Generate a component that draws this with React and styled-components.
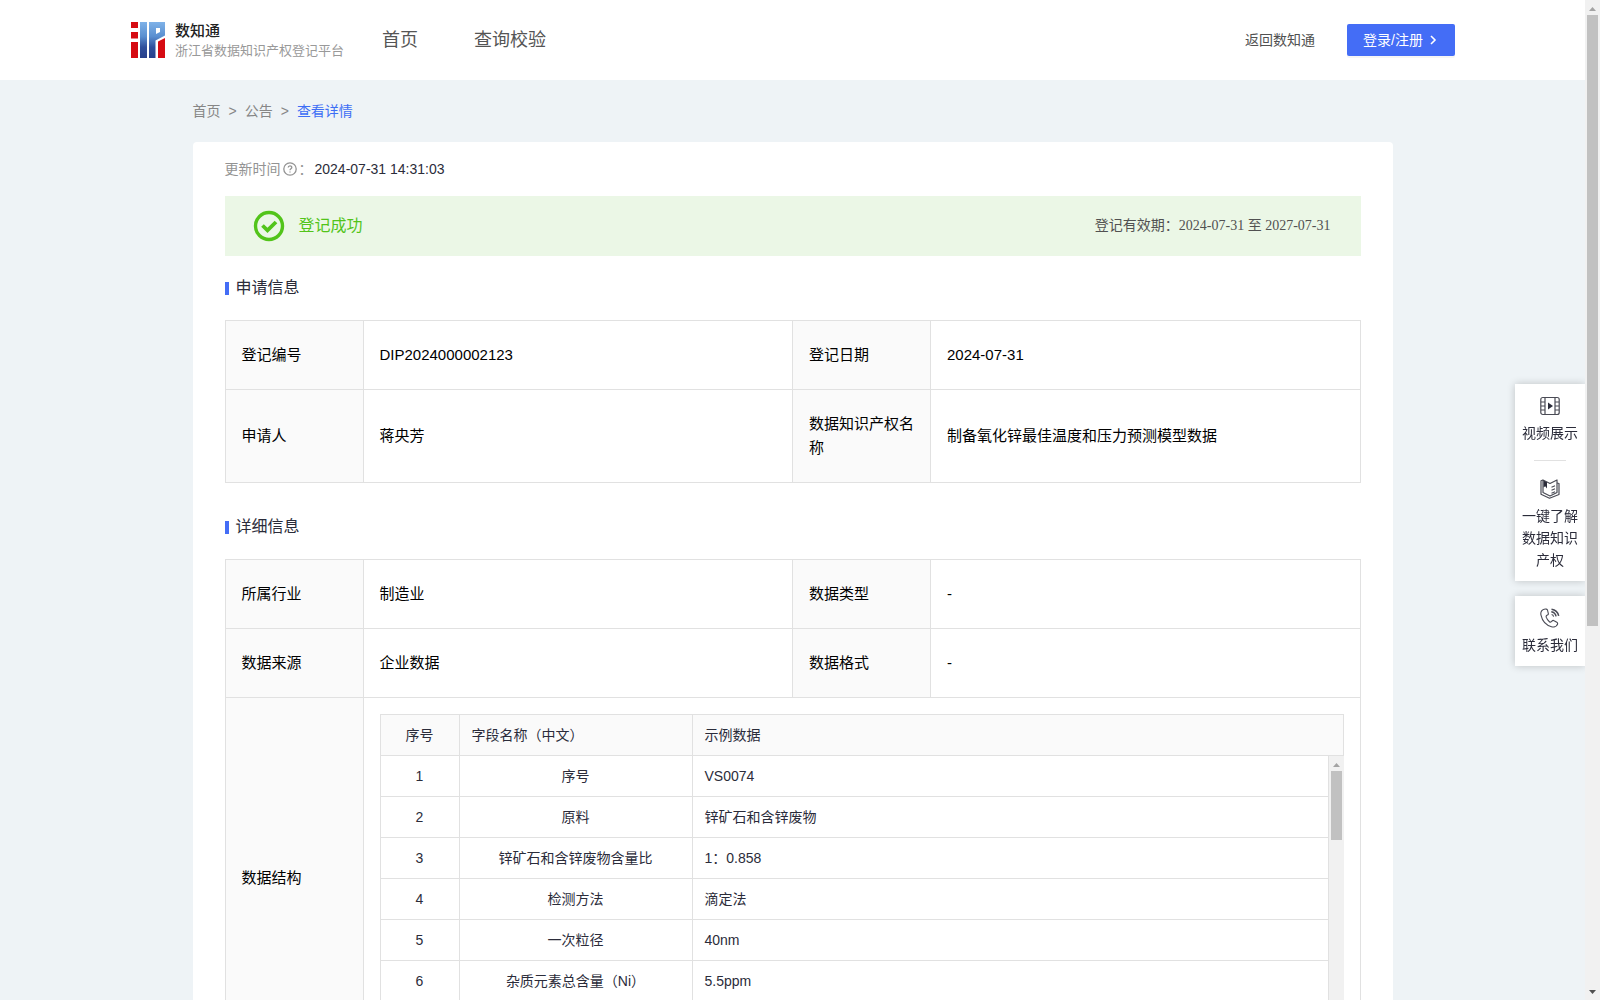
import React from 'react';
import styled, { createGlobalStyle } from 'styled-components';

const GlobalStyle = createGlobalStyle`
  * {
    box-sizing: border-box;
  }

  body {
    margin: 0;
    background: #eef3f6;
    color: #2b2c3a;
    font-family: 'Liberation Sans', 'Noto Sans CJK SC', sans-serif;
    font-size: 14px;
    line-height: 22px;
  }
`;

const Shell = styled.div`
  display: flex;
  height: 100vh;
`;

const Viewport = styled.div`
  flex: 1;
  min-width: 0;
  overflow-y: auto;
  scrollbar-width: none;
`;

const Bar = styled.div`
  display: flex;
  flex-direction: column;
  flex: none;
  align-items: center;
  width: 15px;
  background: #f1f1f1;
`;

const BarTrack = styled.div`
  flex: 1;
  width: 11px;
`;

const BarThumb = styled.div`
  height: ${props => props.$size};
  background: #c1c1c1;
`;

const Header = styled.header`
  display: flex;
  align-items: center;
  height: 80px;
  padding: 0 130px 0 131px;
  background: #fff;
`;

const Brand = styled.a`
  display: flex;
  align-items: center;
  gap: 10px;
  text-decoration: none;
`;

const BrandText = styled.div`
  padding-top: 2px;
  line-height: 20px;
`;

const BrandName = styled.div`
  color: #222;
  font-size: 15px;
  font-weight: 500;
`;

const BrandSub = styled.div`
  color: #999;
  font-size: 13px;
`;

const Nav = styled.nav`
  display: flex;
  gap: 56px;
  margin-left: 38px;
`;

const NavLink = styled.a`
  color: #555;
  font-size: 18px;
  text-decoration: none;
`;

const HeaderRight = styled.div`
  display: flex;
  align-items: center;
  gap: 32px;
  margin-left: auto;
`;

const BackLink = styled.a`
  color: #515151;
  text-decoration: none;
`;

const LoginButton = styled.button`
  display: flex;
  align-items: center;
  gap: 4px;
  width: 108px;
  height: 32px;
  padding: 0 16px;
  border: 0;
  border-radius: 2px;
  background: #446df6;
  box-shadow: 0 2px 0 rgba(0, 0, 0, 0.04);
  color: #fff;
  font: inherit;
  white-space: nowrap;
`;

const Page = styled.main`
  max-width: 1200px;
  margin: 0 auto;
  padding-bottom: 64px;
`;

const Breadcrumb = styled.nav`
  display: flex;
  gap: 8px;
  padding: 20px 0;
  color: #868686;
`;

const Crumb = styled.a`
  color: ${props => (props.$active ? '#3d6ef5' : '#868686')};
  text-decoration: none;
`;

const Card = styled.div`
  padding: 15px 32px 32px;
  border-radius: 4px;
  background: #fff;
`;

const Updated = styled.div`
  display: flex;
  align-items: center;
  margin-bottom: 15px;
  color: #939393;
  line-height: 24px;

  svg {
    margin: 0 2px;
  }
`;

const UpdatedTime = styled.span`
  margin-left: 2px;
  color: #2b2c3a;
`;

const Banner = styled.div`
  display: flex;
  align-items: center;
  gap: 14px;
  height: 60px;
  padding: 0 30px 0 28px;
  background: #ebf7e6;
`;

const BannerStatus = styled.span`
  color: #52c41a;
  font-size: 16px;
`;

const BannerPeriod = styled.span`
  margin-left: auto;
  color: #515151;
  font-family: 'Liberation Serif', 'Noto Sans CJK SC', serif;
`;

const SectionTitle = styled.h2`
  display: flex;
  align-items: center;
  gap: 7px;
  margin: ${props => (props.$first ? '20px' : '32px')} 0 20px;
  font-size: 16px;
  font-weight: normal;
  line-height: 24px;

  &::before {
    content: '';
    width: 4px;
    height: 13px;
    background: #446df6;
  }
`;

const InfoTable = styled.table`
  width: 100%;
  border-collapse: collapse;
  table-layout: fixed;
  color: #000;
  font-size: 15px;
  line-height: 24px;

  > tbody > tr > th,
  > tbody > tr > td {
    padding: 22px 16px;
    border: 1px solid #e1e1e1;
    font-weight: normal;
    text-align: left;
  }

  > tbody > tr > th {
    background: #fafafa;
  }

  > tbody > tr > td.nested {
    padding: 16px;
  }
`;

const LabelCol = styled.col`
  width: 138px;
`;

const FieldTable = styled.table`
  width: 100%;
  border-collapse: separate;
  border-spacing: 0;
  table-layout: fixed;
  color: #2b2c3a;
  font-size: 14px;
  line-height: 24px;

  th,
  td {
    height: 41px;
    padding: 8px 12px;
    border: solid #e1e1e1;
    border-width: 0 1px 1px 0;
    font-weight: normal;
    text-align: left;
  }

  th {
    border-top-width: 1px;
    background: #fafafa;
  }

  th:first-child,
  td:first-child {
    border-left-width: 1px;
    text-align: center;
  }

  td:nth-child(2) {
    text-align: center;
  }
`;

const FieldCol = styled.col`
  width: ${props => props.$width}px;
`;

const FieldBody = styled.div`
  display: flex;
  height: 286px;
`;

const Side = styled.aside`
  position: fixed;
  top: 384px;
  right: 15px;
  display: flex;
  flex-direction: column;
  gap: 15px;
  width: 70px;
  clip-path: inset(-10px 0 -10px -10px);
`;

const SideCard = styled.div`
  padding: 12px 7px 10px;
  background: #fff;
  box-shadow: 0 0 8px rgba(0, 0, 0, 0.2);
`;

const SideItem = styled.a`
  display: flex;
  flex-direction: column;
  align-items: center;
  gap: 6px;
  color: #2b2c3a;
  text-align: center;
  text-decoration: none;
`;

const SideDivider = styled.hr`
  width: 32px;
  margin: 16px auto 18px;
  border: 0;
  border-top: 1px solid #e1e1e1;
`;

function Logo() {
  return (
    <svg width="34" height="36" viewBox="0 0 34 36" aria-hidden="true">
      <defs>
        <linearGradient id="logoBlue" gradientUnits="userSpaceOnUse" x1="0" y1="0" x2="0" y2="36">
          <stop offset="0" stopColor="#7fb2e8" />
          <stop offset="0.4" stopColor="#5a8fd0" />
          <stop offset="0.7" stopColor="#2f4f9c" />
          <stop offset="1" stopColor="#27408b" />
        </linearGradient>
      </defs>
      <path d="M0 0h7v6H0zM0 10h7v6.500H0zM0 20h7v16H0zM27 19.500l7-3.500v20h-7z" fill="#d60b12" />
      <path d="M9 0h7v36H9z" fill="url(#logoBlue)" />
      <path d="M18 0h16v13.500l-9.500 5V36H18zM25 6v6l4-2V6z" fill="url(#logoBlue)" fillRule="evenodd" />
    </svg>
  );
}

function ChevronIcon() {
  return (
    <svg width="12" height="12" viewBox="0 0 12 12" fill="none" stroke="#fff" strokeWidth="1.6" aria-hidden="true">
      <path d="M4 2l4 4-4 4" />
    </svg>
  );
}

function QuestionIcon() {
  return (
    <svg width="14" height="14" viewBox="0 0 14 14" fill="none" stroke="#939393" strokeWidth="1.3" aria-hidden="true">
      <circle cx="7" cy="7" r="6.200" />
      <path d="M5.200 5.600c0-2.400 3.600-2.400 3.600-.1 0 1.300-1.800 1.300-1.800 2.700M7 9.400v1.200" />
    </svg>
  );
}

function SuccessIcon() {
  return (
    <svg width="32" height="32" viewBox="0 0 32 32" fill="none" stroke="#52c41a" aria-hidden="true">
      <circle cx="16" cy="16" r="13.500" strokeWidth="3.400" />
      <path d="M9.500 15.500l5 4.800 8.500-8.300" strokeWidth="3.800" />
    </svg>
  );
}

function VideoIcon() {
  return (
    <svg width="20" height="20" viewBox="0 0 20 20" fill="none" stroke="#4a4b55" strokeWidth="1.2" aria-hidden="true">
      <rect x="0.800" y="1.500" width="18.400" height="17" rx="2" />
      <path d="M5 1.500v17M15 1.500v17M1 6h4M1 10h4M1 14h4M15 6h4M15 10h4M15 14h4" />
      <path d="M8 6.500l5 3.500-5 3.500z" fill="#2b2c3a" stroke="none" />
    </svg>
  );
}

function BookIcon() {
  return (
    <svg width="20" height="20" viewBox="0 0 20 20" fill="none" stroke="#4a4b55" strokeWidth="1.2" strokeLinejoin="round" aria-hidden="true">
      <path d="M3 1L1 1.800v13.400l8.500 4L19 15.500V4.500l-2-.5" />
      <path d="M3 1l7 3.500 7-3.500v12.500l-7 3.500-7-3.500z" />
      <path d="M3.500 1.500v7l1.700-1.300 1.800 2.300V3.200z" fill="#2b2c3a" stroke="none" />
      <path d="M11.500 8.200l3.500-1.400M11.500 11.200l3.500-1.400M11.500 14.200l3.500-1.400" />
    </svg>
  );
}

function PhoneIcon() {
  return (
    <svg width="20" height="20" viewBox="0 0 20 20" fill="none" stroke="#4a4b55" strokeWidth="1.1" aria-hidden="true">
      <path d="M4.200 1.200C1.800 2 .4 4.500 1 7.200c1.200 5.600 5 10 10.500 11.600 2.600.7 5.200-.5 6-2.600.3-.8 0-1.500-.7-1.900l-2.700-1.600c-.8-.5-1.600-.2-2.200.5-.7.900-1.600 1.200-2.500.5-1.500-1.200-2.600-2.700-3.200-4.500-.3-1 .2-1.700 1.200-2.100.8-.3 1.100-1 .9-1.800l-.8-3.100C7.200 1.200 5.800.7 4.200 1.200z" />
      <path d="M11.600 6.500c1 .2 1.800 1 2 2.100" />
      <path d="M11.300 3.800c2.400.4 4.300 2.100 4.800 4.500M11.500 1.200c3.600.5 6.400 3 7.200 6.600" strokeWidth="1.500" />
    </svg>
  );
}

function ScrollBar({ thumb, end }) {
  return (
    <Bar aria-hidden="true">
      <svg width="15" height="15" viewBox="0 0 15 15">
        <path d="M4 11l3.500-4 3.500 4z" fill="#a3a3a3" />
      </svg>
      <BarTrack>
        <BarThumb $size={thumb} />
      </BarTrack>
      {end && (
        <svg width="15" height="15" viewBox="0 0 15 15">
          <path d="M4 5l3.500 4L11 5z" fill="#505050" />
        </svg>
      )}
    </Bar>
  );
}

const fields = [
  ['序号', 'VS0074'],
  ['原料', '锌矿石和含锌废物'],
  ['锌矿石和含锌废物含量比', '1：0.858'],
  ['检测方法', '滴定法'],
  ['一次粒径', '40nm'],
  ['杂质元素总含量（Ni）', '5.5ppm'],
];

function InfoCols() {
  return (
    <colgroup>
      <LabelCol />
      <col />
      <LabelCol />
      <col />
    </colgroup>
  );
}

function InfoRow({ items }) {
  return (
    <tr>
      {items.map(([label, value]) => (
        <React.Fragment key={label}>
          <th scope="row">{label}</th>
          <td>{value}</td>
        </React.Fragment>
      ))}
    </tr>
  );
}

function FieldCols() {
  return (
    <colgroup>
      <FieldCol $width={80} />
      <FieldCol $width={233} />
      <col />
    </colgroup>
  );
}

function FieldList() {
  return (
    <>
      <FieldTable>
        <FieldCols />
        <thead>
          <tr>
            <th scope="col">序号</th>
            <th scope="col">字段名称（中文）</th>
            <th scope="col">示例数据</th>
          </tr>
        </thead>
      </FieldTable>
      <FieldBody>
        <Viewport>
          <FieldTable>
            <FieldCols />
            <tbody>
              {fields.map(([name, sample], i) => (
                <tr key={name}>
                  <td>{i + 1}</td>
                  <td>{name}</td>
                  <td>{sample}</td>
                </tr>
              ))}
            </tbody>
          </FieldTable>
        </Viewport>
        <ScrollBar thumb="69px" end />
      </FieldBody>
    </>
  );
}

function App() {
  return (
    <Shell>
      <GlobalStyle />
      <Viewport>
        <Header>
          <Brand href="#">
            <Logo />
            <BrandText>
              <BrandName>数知通</BrandName>
              <BrandSub>浙江省数据知识产权登记平台</BrandSub>
            </BrandText>
          </Brand>
          <Nav>
            <NavLink href="#">首页</NavLink>
            <NavLink href="#">查询校验</NavLink>
          </Nav>
          <HeaderRight>
            <BackLink href="#">返回数知通</BackLink>
            <LoginButton type="button">
              登录/注册
              <ChevronIcon />
            </LoginButton>
          </HeaderRight>
        </Header>

        <Page>
          <Breadcrumb>
            <Crumb href="#">首页</Crumb>
            <span>&gt;</span>
            <Crumb href="#">公告</Crumb>
            <span>&gt;</span>
            <Crumb href="#" $active>查看详情</Crumb>
          </Breadcrumb>

          <Card>
            <Updated>
              更新时间
              <QuestionIcon />
              ：
              <UpdatedTime>2024-07-31 14:31:03</UpdatedTime>
            </Updated>

            <Banner>
              <SuccessIcon />
              <BannerStatus>登记成功</BannerStatus>
              <BannerPeriod>登记有效期：2024-07-31 至 2027-07-31</BannerPeriod>
            </Banner>

            <SectionTitle $first>申请信息</SectionTitle>
            <InfoTable>
              <InfoCols />
              <tbody>
                <InfoRow items={[['登记编号', 'DIP2024000002123'], ['登记日期', '2024-07-31']]} />
                <InfoRow items={[['申请人', '蒋央芳'], ['数据知识产权名称', '制备氧化锌最佳温度和压力预测模型数据']]} />
              </tbody>
            </InfoTable>

            <SectionTitle>详细信息</SectionTitle>
            <InfoTable>
              <InfoCols />
              <tbody>
                <InfoRow items={[['所属行业', '制造业'], ['数据类型', '-']]} />
                <InfoRow items={[['数据来源', '企业数据'], ['数据格式', '-']]} />
                <tr>
                  <th scope="row">数据结构</th>
                  <td className="nested" colSpan={3}>
                    <FieldList />
                  </td>
                </tr>
              </tbody>
            </InfoTable>
          </Card>
        </Page>
      </Viewport>
      <ScrollBar thumb="63%" end />

      <Side>
        <SideCard>
          <SideItem href="#">
            <VideoIcon />
            视频展示
          </SideItem>
          <SideDivider />
          <SideItem href="#">
            <BookIcon />
            一键了解数据知识产权
          </SideItem>
        </SideCard>
        <SideCard>
          <SideItem href="#">
            <PhoneIcon />
            联系我们
          </SideItem>
        </SideCard>
      </Side>
    </Shell>
  );
}

export default App;
